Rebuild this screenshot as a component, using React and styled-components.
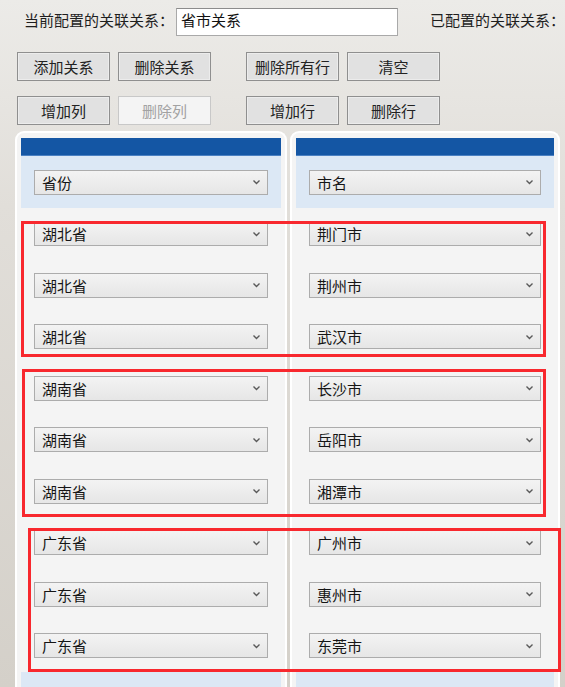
import React from 'react'
import styled, { createGlobalStyle } from 'styled-components'

const GlobalStyle = createGlobalStyle`
  html, body {
    margin: 0;
    padding: 0;
    overflow: hidden;
  }
  body {
    font-family: "Noto Sans CJK SC", "Noto Sans", sans-serif;
    color: #1e1e1e;
  }
`

const topButtons = [
  ['添加关系', '删除关系', '删除所有行', '清空'],
  ['增加列', '删除列', '增加行', '删除行'],
]

const provinces = ['湖北省', '湖北省', '湖北省', '湖南省', '湖南省', '湖南省', '广东省', '广东省', '广东省']
const cities = ['荆门市', '荆州市', '武汉市', '长沙市', '岳阳市', '湘潭市', '广州市', '惠州市', '东莞市']

// red annotation frames drawn over the grid
const marks = [
  { left: 6, top: 90, width: 525, height: 136 },
  { left: 7, top: 238, width: 524, height: 148 },
  { left: 13, top: 397, width: 533, height: 144 },
]

function Chevron() {
  return (
    <svg width="9" height="6" viewBox="0 0 9 6">
      <path d="M1.5 1.5 L4.5 4.5 L7.5 1.5" fill="none" stroke="#5a5a5a" strokeWidth="1.4" />
    </svg>
  )
}

function Dropdown({ value }) {
  return (
    <Select>
      <span>{value}</span>
      <Chevron />
    </Select>
  )
}

function Column({ title, items, $narrow }) {
  return (
    <Panel $narrow={$narrow}>
      <TitleBar />
      <HeadBand>
        <Dropdown value={title} />
      </HeadBand>
      {items.map((v, i) => (
        <Row key={i}>
          <Dropdown value={v} />
        </Row>
      ))}
      <FootBand />
    </Panel>
  )
}

function App() {
  return (
    <Page>
      <GlobalStyle />
      <TopLine>
        <Label>当前配置的关联关系：</Label>
        <NameInput defaultValue="省市关系" readOnly />
        <Label $offset>已配置的关联关系：</Label>
      </TopLine>
      {topButtons.map((row, r) => (
        <ButtonRow key={r}>
          {row.map((t, i) => (
            <Button key={t} $apart={i === 2} disabled={t === '删除列'}>
              {t}
            </Button>
          ))}
        </ButtonRow>
      ))}
      <Grid>
        <Column title="省份" items={provinces} />
        <Column title="市名" items={cities} $narrow />
        {marks.map((m, i) => (
          <Mark key={i} style={m} />
        ))}
      </Grid>
    </Page>
  )
}

export default App

const Page = styled.div`
  height: 687px;
  overflow: hidden;
  background: linear-gradient(to bottom, #ecebe8 0%, #e1ded9 30%, #d4d0c9 100%);
`

const TopLine = styled.div`
  display: flex;
  align-items: center;
  padding: 8px 0 0 24px;
`

const Label = styled.span`
  font-size: 15px;
  line-height: 20px;
  margin-top: -4px;
  margin-left: ${p => (p.$offset ? '32px' : '0')};
  white-space: nowrap;
`

const NameInput = styled.input`
  box-sizing: border-box;
  width: 224px;
  height: 28px;
  margin-left: 2px;
  padding: 0 4px 5px;
  border: 1px solid #a9a9a9;
  border-top-color: #8c8c8c;
  background: #fff;
  font-family: inherit;
  font-size: 15px;
  color: #111;
  outline: none;
`

const ButtonRow = styled.div`
  display: flex;
  gap: 8px;
  padding-left: 17px;
  margin-top: 16px;

  & + & {
    margin-top: 15px;
  }
`

const Button = styled.button`
  box-sizing: border-box;
  width: 93px;
  height: 29px;
  margin-left: ${p => (p.$apart ? '27px' : '0')};
  padding: 0;
  border: 1px solid #8f8f8f;
  background: #e1e1e1;
  box-shadow: inset 0 0 0 1px #ececec;
  font-family: inherit;
  font-size: 15px;
  line-height: 1;
  color: #222;

  &:disabled {
    border-color: #c8c8c8;
    background: #f4f4f4;
    box-shadow: none;
    color: #a2a2a2;
  }
`

const Grid = styled.div`
  position: relative;
  display: flex;
  gap: 3px;
  margin: 6px 0 0 15px;
`

const Panel = styled.div`
  box-sizing: border-box;
  width: ${p => (p.$narrow ? '270px' : '272px')};
  padding: 5px 4px 0;
  border: 2px solid #fff;
  border-bottom: none;
  border-radius: 9px 9px 0 0;
  background: #f4f4f4;
  display: flex;
  flex-direction: column;
`

const TitleBar = styled.div`
  height: 18px;
  background: #1456a4;
  border-bottom: 1px solid #4a80c2;
  box-sizing: border-box;
`

const HeadBand = styled.div`
  height: 52px;
  display: flex;
  align-items: center;
  padding: 0 13px;
  background: #dce8f5;
`

const Row = styled.div`
  height: 51.5px;
  display: flex;
  align-items: center;
  padding: 0 13px;
`

const FootBand = styled.div`
  height: 30px;
  background: #dce8f5;
`

const Select = styled.div`
  flex: 1;
  box-sizing: border-box;
  height: 25px;
  display: flex;
  align-items: center;
  justify-content: space-between;
  padding: 0 6px 0 7px;
  border: 1px solid #acacac;
  background: linear-gradient(to bottom, #f3f3f3, #e6e6e6);
  font-size: 15px;
  line-height: 1;
  color: #151515;
`

const Mark = styled.div`
  position: absolute;
  box-sizing: border-box;
  border: 3px solid #f8282e;
  pointer-events: none;
`
